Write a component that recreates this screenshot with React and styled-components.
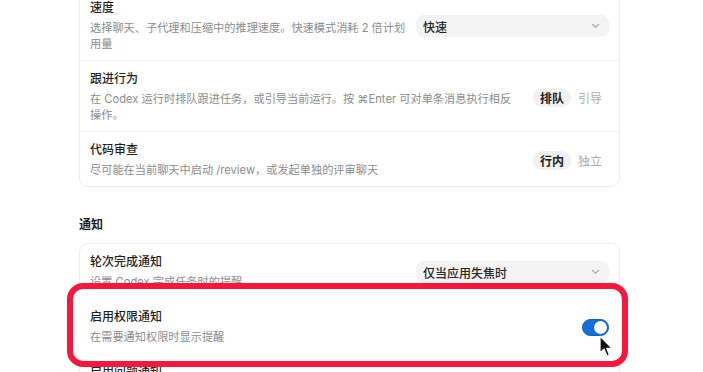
import React from 'react';
import styled, { createGlobalStyle } from 'styled-components';

const GlobalStyle = createGlobalStyle`
  html, body {
    margin: 0;
    background: #ffffff;
  }
  body {
    font-family: Inter, "Noto Sans CJK SC", "Noto Sans", sans-serif;
    color: #1f1f1f;
    -webkit-font-smoothing: antialiased;
  }
`

const Viewport = styled.div`
  height: 372px;
  overflow: hidden;
`

const Page = styled.div`
  width: 541px;
  margin-top: -11px;
  padding-left: 79px;
`

const Card = styled.div`
  background: #fff;
  border: 1px solid #ececec;
  border-radius: 9px;
`

const Row = styled.div`
  display: flex;
  align-items: center;
  gap: 6px;
  padding: 10px 10px 8px 10px;
  position: relative;

  & + & {
    border-top: 1px solid #f3f3f3;
  }
`

const HighlightRow = styled(Row)`
  z-index: 1;

  &::before {
    content: "";
    position: absolute;
    top: -16px;
    left: -13px;
    right: -9px;
    bottom: -14px;
    background: #fff;
    border: 6px solid #f7173d;
    border-radius: 16px;
    z-index: -1;
  }
`

const TextCol = styled.div`
  flex: 1;
  min-width: 0;
  max-width: ${p => p.$max || 'none'};
`

const Title = styled.div`
  font-size: 12px;
  line-height: 16px;
  font-weight: 500;
  color: #1f1f1f;
`

const Desc = styled.div`
  margin-top: 4px;
  font-size: 11.2px;
  line-height: 16px;
  color: #8c8c8c;
`

const SectionTitle = styled.div`
  margin: 30px 0 10px;
  font-size: 12px;
  line-height: 16px;
  font-weight: 600;
  color: #1a1a1a;
`

const Select = styled.div`
  flex-shrink: 0;
  margin-left: auto;
  width: 193px;
  height: 22px;
  box-sizing: border-box;
  padding: 0 9px 0 7px;
  display: flex;
  align-items: center;
  justify-content: space-between;
  background: #f3f3f3;
  border-radius: 8px;
  font-size: 12px;
  font-weight: 500;
  color: #262626;
`

const Segmented = styled.div`
  flex-shrink: 0;
  margin-left: auto;
  display: flex;
`

const Segment = styled.div`
  height: 19px;
  padding: 0 7px;
  display: flex;
  align-items: center;
  border-radius: 10px;
  font-size: 12px;
  font-weight: ${p => (p.$active ? 600 : 400)};
  color: ${p => (p.$active ? '#222' : '#ababab')};
  background: ${p => (p.$active ? '#f1f1f1' : 'transparent')};
`

const ToggleWrap = styled.div`
  flex-shrink: 0;
  margin-left: auto;
  position: relative;
`

const Toggle = styled.div`
  width: 27px;
  height: 17px;
  box-sizing: border-box;
  border-radius: 9px;
  background: #1170db;
  border: 1px solid #0b60bd;
  display: flex;
  align-items: center;
  justify-content: ${p => (p.$on ? 'flex-end' : 'flex-start')};
  padding: 0 1px;
`

const Knob = styled.div`
  width: 13px;
  height: 13px;
  border-radius: 50%;
  background: #fff;
  box-shadow: 0 0 1px rgba(0, 0, 0, 0.3);
`

const Cursor = styled.svg`
  position: absolute;
  left: 16px;
  top: 16px;
`

const Chevron = () => (
  <svg width="9" height="6" viewBox="0 0 9 6" fill="none">
    <path d="M1.5 1.5 L4.5 4.4 L7.5 1.5" stroke="#a6a6a6" strokeWidth="1.1" strokeLinecap="round" strokeLinejoin="round" />
  </svg>
)

const Pointer = () => (
  <Cursor width="16" height="23" viewBox="0 0 14 21">
    <path
      d="M1.5 1 L1.5 16.5 L5.2 13 L7.8 19.2 L10.2 18.2 L7.7 12.2 L12.6 12.2 Z"
      fill="#111"
      stroke="#fff"
      strokeWidth="1.2"
      strokeLinejoin="round"
    />
  </Cursor>
)

export default function App() {
  return (
    <Viewport>
      <GlobalStyle />
      <Page>
        <Card>
          <Row>
            <TextCol>
              <Title>速度</Title>
              <Desc>选择聊天、子代理和压缩中的推理速度。快速模式消耗 2 倍计划用量</Desc>
            </TextCol>
            <Select>
              <span>快速</span>
              <Chevron />
            </Select>
          </Row>
          <Row>
            <TextCol $max="426px">
              <Title>跟进行为</Title>
              <Desc>在 Codex 运行时排队跟进任务，或引导当前运行。按 ⌘Enter 可对单条消息执行相反操作。</Desc>
            </TextCol>
            <Segmented>
              <Segment $active>排队</Segment>
              <Segment>引导</Segment>
            </Segmented>
          </Row>
          <Row>
            <TextCol>
              <Title>代码审查</Title>
              <Desc>尽可能在当前聊天中启动 /review，或发起单独的评审聊天</Desc>
            </TextCol>
            <Segmented>
              <Segment $active>行内</Segment>
              <Segment>独立</Segment>
            </Segmented>
          </Row>
        </Card>

        <SectionTitle>通知</SectionTitle>

        <Card>
          <Row>
            <TextCol>
              <Title>轮次完成通知</Title>
              <Desc>设置 Codex 完成任务时的提醒</Desc>
            </TextCol>
            <Select>
              <span>仅当应用失焦时</span>
              <Chevron />
            </Select>
          </Row>
          <HighlightRow>
            <TextCol>
              <Title>启用权限通知</Title>
              <Desc>在需要通知权限时显示提醒</Desc>
            </TextCol>
            <ToggleWrap>
              <Toggle $on>
                <Knob />
              </Toggle>
              <Pointer />
            </ToggleWrap>
          </HighlightRow>
          <Row>
            <TextCol>
              <Title>启用问题通知</Title>
              <Desc>在 Codex 提出问题时显示提醒</Desc>
            </TextCol>
          </Row>
        </Card>
      </Page>
    </Viewport>
  );
}
